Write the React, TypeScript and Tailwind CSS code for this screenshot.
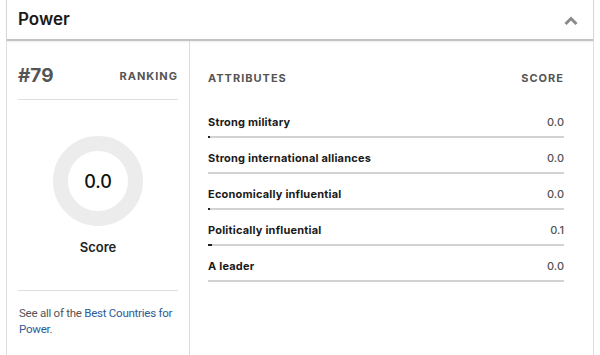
const attributes = [
  { label: "Strong military", score: "0.0", fill: 0.5 },
  { label: "Strong international alliances", score: "0.0", fill: 0 },
  { label: "Economically influential", score: "0.0", fill: 0.5 },
  { label: "Politically influential", score: "0.1", fill: 1 },
  { label: "A leader", score: "0.0", fill: 0 },
];

function ChevronUp() {
  return (
    <svg width="14" height="10" viewBox="0 0 14 10" className="mt-[2px] text-[#8a8a8a]">
      <path d="M1.5 8 L7 2.5 L12.5 8" fill="none" stroke="currentColor" strokeWidth="3" strokeLinejoin="miter" />
    </svg>
  );
}

export default function App() {
  return (
    <div className="h-[355px] w-[600px] overflow-hidden bg-white" style={{ fontFamily: "Inter, 'Liberation Sans', sans-serif" }}>
      <div className="ml-[6px] h-full w-[588px] border-x border-[#dcdcdc]">
        {/* Kopfzeile */}
        <div className="flex h-[41px] items-center justify-between border-b-2 border-[#c2c2c2] pl-[11px] pr-[15px] shadow-[0_1px_2px_rgba(0,0,0,0.08)]">
          <span className="text-[17px] font-semibold text-[#1a1a1a]">Power</span>
          <ChevronUp />
        </div>

        <div className="flex h-full">
          {/* Ranking + Score */}
          <div className="w-[183px] shrink-0 border-r border-[#dcdcdc] px-[11px]">
            <div className="flex h-[59px] items-end justify-between border-b border-[#dedede] pb-[11px]">
              <span className="text-[19px] font-bold leading-6 text-[#555]">#79</span>
              <span className="text-[11px] font-bold leading-6 tracking-[1px] text-[#555]">RANKING</span>
            </div>
            <div className="flex h-[191px] flex-col items-center border-b border-[#dedede] pt-[36px]">
              <div className="flex h-[90px] w-[90px] items-center justify-center rounded-full border-[15px] border-[#ececec]">
                <span className="text-[18px] font-medium text-[#111]">0.0</span>
              </div>
              <span className="mt-[12px] text-[13px] font-semibold leading-[18px] text-[#222]">Score</span>
            </div>
            <p
              className="mt-[14px] pl-px text-[11.5px] leading-4 tracking-[-0.25px] text-[#555]"
              style={{ fontFamily: "Roboto, 'Liberation Sans', sans-serif" }}
            >
              See all of the <span className="text-[#2b5c97]">Best Countries for Power</span>.
            </p>
          </div>

          {/* Attribute */}
          <div className="flex-1 pl-[18px] pr-[29px] pt-[29px]">
            <div className="flex items-center justify-between text-[11px] font-bold leading-4 tracking-[1px] text-[#555]">
              <span>ATTRIBUTES</span>
              <span>SCORE</span>
            </div>
            <div className="mt-[28px]">
              {attributes.map((a) => (
                <div key={a.label} className="pb-[12px]">
                  <div className="flex items-center justify-between leading-4">
                    <span className="text-[11px] font-bold tracking-[0.2px] text-[#1a1a1a]">{a.label}</span>
                    <span className="text-[11px] font-medium text-[#555]">{a.score}</span>
                  </div>
                  <div className="mt-[6px] h-[2px] bg-[#d2d2d2]">
                    <div className="h-full bg-[#222]" style={{ width: `${a.fill}%` }} />
                  </div>
                </div>
              ))}
            </div>
          </div>
        </div>
      </div>
    </div>
  );
}
